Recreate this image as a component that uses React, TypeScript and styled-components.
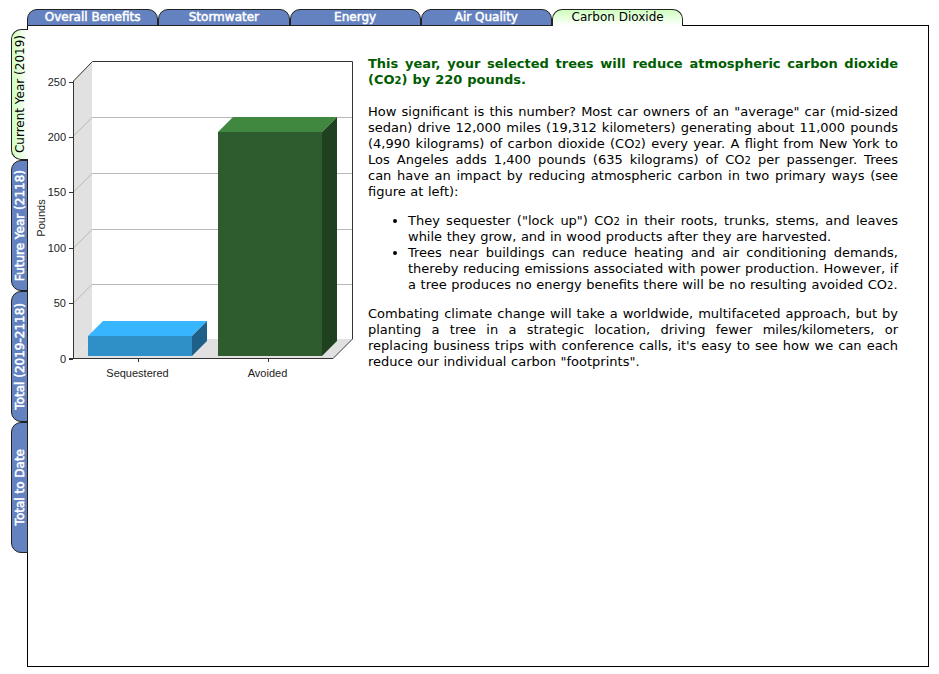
import React from 'react';
import styled, { createGlobalStyle } from 'styled-components';

const topTabs = ['Overall Benefits', 'Stormwater', 'Energy', 'Air Quality', 'Carbon Dioxide'];
const sideTabs = ['Current Year (2019)', 'Future Year (2118)', 'Total (2019-2118)', 'Total to Date'];
const ticks = [0, 50, 100, 150, 200, 250];

const Chart = () => (
  <ChartSvg width="320" height="330" viewBox="36 58 320 330">
    <polygon points="73,81 92,61 92,339 73,358" fill="#e1e1e1" />
    <polygon points="73,358 92,339 352,339 333,358" fill="#e1e1e1" />
    {[117, 173, 229, 284].map((y) => (
      <polyline key={y} points={`73,${y + 19.5} 92,${y + 0.5} 352,${y + 0.5}`} fill="none" stroke="#b8b8b8" />
    ))}
    <polyline points="73.5,81 92.5,61.5 352.5,61.5 352.5,339 333,358.5" fill="none" stroke="#333" />
    <line x1="73.5" y1="81" x2="73.5" y2="358" stroke="#333" />
    <line x1="69" y1="358.5" x2="333" y2="358.5" stroke="#333" />
    {ticks.map((t, i) => {
      const y = 358.5 - i * 55.4;
      return (
        <g key={t}>
          <line x1="69" x2="73" y1={Math.round(y) + 0.5} y2={Math.round(y) + 0.5} stroke="#333" />
          <AxisText x="66" y={y + 4} textAnchor="end">{t}</AxisText>
        </g>
      );
    })}
    <line x1="138.5" x2="138.5" y1="358" y2="362" stroke="#333" />
    <line x1="268.5" x2="268.5" y1="358" y2="362" stroke="#333" />
    <polygon points="88,336 103,321 207,321 192,336" fill="#38b5ff" />
    <polygon points="192,336 207,321 207,341 192,356" fill="#1f6088" />
    <rect x="88" y="336" width="104" height="20" fill="#2f90c8" />
    <polygon points="218,132 233,117 337,117 322,132" fill="#40873f" />
    <polygon points="322,132 337,117 337,341 322,356" fill="#1f4120" />
    <rect x="218" y="132" width="104" height="224" fill="#2e5c2f" />
    <AxisText x="137.5" y="377" textAnchor="middle">Sequestered</AxisText>
    <AxisText x="267.5" y="377" textAnchor="middle">Avoided</AxisText>
    <AxisText x="0" y="0" textAnchor="middle" transform="translate(45,218) rotate(-90)">Pounds</AxisText>
  </ChartSvg>
);

export default function App() {
  return (
    <Page>
      <GlobalStyle />
      <TopTabs>
        {topTabs.map((tab) => (
          <TopTab key={tab} $active={tab === 'Carbon Dioxide'}>{tab}</TopTab>
        ))}
      </TopTabs>
      <Body>
        <SideTabs>
          {sideTabs.map((tab, i) => (
            <SideTab key={tab} $active={i === 0}><span>{tab}</span></SideTab>
          ))}
        </SideTabs>
        <Panel>
          <Chart />
          <Copy>
            <Heading>
              This year, your selected trees will reduce atmospheric carbon dioxide (CO<Sub>2</Sub>) by 220 pounds.
            </Heading>
            <Para>
              How significant is this number? Most car owners of an "average" car (mid-sized sedan) drive 12,000 miles
              (19,312 kilometers) generating about 11,000 pounds (4,990 kilograms) of carbon dioxide (CO<Sub>2</Sub>) every
              year. A flight from New York to Los Angeles adds 1,400 pounds (635 kilograms) of CO<Sub>2</Sub> per passenger.
              Trees can have an impact by reducing atmospheric carbon in two primary ways (see figure at left):
            </Para>
            <List>
              <li>
                They sequester ("lock up") CO<Sub>2</Sub> in their roots, trunks, stems, and leaves while they grow, and in
                wood products after they are harvested.
              </li>
              <li>
                Trees near buildings can reduce heating and air conditioning demands, thereby reducing emissions associated
                with power production. However, if a tree produces no energy benefits there will be no resulting avoided
                CO<Sub>2</Sub>.
              </li>
            </List>
            <Para>
              Combating climate change will take a worldwide, multifaceted approach, but by planting a tree in a strategic
              location, driving fewer miles/kilometers, or replacing business trips with conference calls, it's easy to see
              how we can each reduce our individual carbon "footprints".
            </Para>
          </Copy>
        </Panel>
      </Body>
    </Page>
  );
}

const GlobalStyle = createGlobalStyle`
  html, body {
    margin: 0;
    background: #fff;
  }
`;
const Page = styled.div`
  width: 939px;
  height: 674px;
  box-sizing: border-box;
  padding: 9px 0 0 11px;
  font-family: Verdana, 'DejaVu Sans', sans-serif;
  color: #000;
  overflow: hidden;
`;
const TopTabs = styled.div`
  display: flex;
  margin-left: 16px;
  height: 17px;
  position: relative;
  z-index: 1;
`;
const TopTab = styled.div<{ $active?: boolean }>`
  width: 131.25px;
  height: 17px;
  box-sizing: border-box;
  border: 1px solid #222;
  border-bottom: ${({ $active }) => ($active ? 'none' : '1px solid #222')};
  border-radius: 10px 10px 0 0;
  background: ${({ $active }) => ($active ? 'linear-gradient(#cfffbe, #fff)' : '#6482c0')};
  color: ${({ $active }) => ($active ? '#000' : '#fff')};
  font-size: 12px;
  -webkit-text-stroke: ${({ $active }) => ($active ? '0' : '0.5px #fff')};
  line-height: 15px;
  text-align: center;
`;
const Body = styled.div`
  display: flex;
  margin-top: -1px;
`;
const SideTabs = styled.div`
  display: flex;
  flex-direction: column;
  width: 16px;
  padding-top: 4px;
  position: relative;
  z-index: 1;
`;
const SideTab = styled.div<{ $active?: boolean }>`
  width: 17px;
  height: 131px;
  box-sizing: border-box;
  border: 1px solid #222;
  border-right: ${({ $active }) => ($active ? 'none' : '1px solid #222')};
  border-radius: 10px 0 0 10px;
  background: ${({ $active }) => ($active ? 'linear-gradient(to right, #cfffbe, #fff)' : '#6482c0')};
  color: ${({ $active }) => ($active ? '#000' : '#fff')};
  font-size: 12px;
  -webkit-text-stroke: ${({ $active }) => ($active ? '0' : '0.5px #fff')};
  display: flex;
  align-items: center;
  justify-content: center;
  span {
    writing-mode: vertical-rl;
    transform: rotate(180deg);
    white-space: nowrap;
  }
`;
const Panel = styled.div`
  width: 902px;
  height: 642px;
  box-sizing: border-box;
  border: 1px solid #000;
  display: flex;
  align-items: flex-start;
  padding: 30px 29px 0 8px;
  background: #fff;
`;
const ChartSvg = styled.svg`
  flex: none;
  margin-top: 2px;
  margin-right: 12px;
`;
const AxisText = styled.text`
  font-family: 'Liberation Sans', Arial, sans-serif;
  font-size: 11px;
  fill: #222;
`;
const Copy = styled.div`
  width: 530px;
  flex: none;
  font-size: 13px;
  line-height: 16px;
  word-spacing: 0.45px;
  text-align: justify;
`;
const Heading = styled.div`
  font-size: 13px;
  font-weight: 700;
  line-height: 16px;
  color: #005c00;
  margin-bottom: 16px;
`;
const Para = styled.p`
  margin: 0 0 16px;
`;
const List = styled.ul`
  margin: -3px 0 13px;
  padding-left: 40px;
`;
const Sub = styled.span`
  font-size: 10px;
  line-height: 0;
`;
